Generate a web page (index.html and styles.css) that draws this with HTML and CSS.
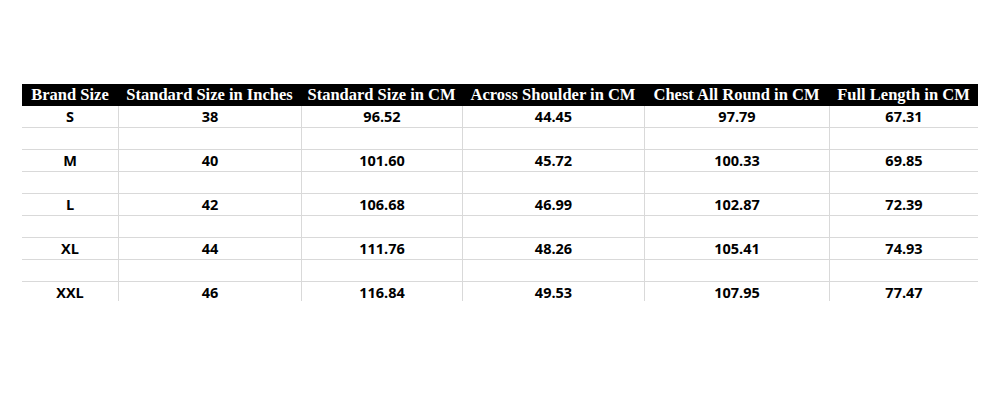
FILE: index.html
```html
<!DOCTYPE html>
<html>
<head>
<meta charset="utf-8">
<link rel="stylesheet" href="styles.css">
</head>
<body>
<div class="sheet">
  <div class="row head">
    <div class="cell">Brand Size</div>
    <div class="cell">Standard Size in Inches</div>
    <div class="cell">Standard Size in CM</div>
    <div class="cell">Across Shoulder in CM</div>
    <div class="cell">Chest All Round in CM</div>
    <div class="cell">Full Length in CM</div>
  </div>
  <div class="row data">
    <div class="cell">S</div><div class="cell">38</div><div class="cell">96.52</div><div class="cell">44.45</div><div class="cell">97.79</div><div class="cell">67.31</div>
  </div>
  <div class="row data">
    <div class="cell"></div><div class="cell"></div><div class="cell"></div><div class="cell"></div><div class="cell"></div><div class="cell"></div>
  </div>
  <div class="row data">
    <div class="cell">M</div><div class="cell">40</div><div class="cell">101.60</div><div class="cell">45.72</div><div class="cell">100.33</div><div class="cell">69.85</div>
  </div>
  <div class="row data">
    <div class="cell"></div><div class="cell"></div><div class="cell"></div><div class="cell"></div><div class="cell"></div><div class="cell"></div>
  </div>
  <div class="row data">
    <div class="cell">L</div><div class="cell">42</div><div class="cell">106.68</div><div class="cell">46.99</div><div class="cell">102.87</div><div class="cell">72.39</div>
  </div>
  <div class="row data">
    <div class="cell"></div><div class="cell"></div><div class="cell"></div><div class="cell"></div><div class="cell"></div><div class="cell"></div>
  </div>
  <div class="row data">
    <div class="cell">XL</div><div class="cell">44</div><div class="cell">111.76</div><div class="cell">48.26</div><div class="cell">105.41</div><div class="cell">74.93</div>
  </div>
  <div class="row data">
    <div class="cell"></div><div class="cell"></div><div class="cell"></div><div class="cell"></div><div class="cell"></div><div class="cell"></div>
  </div>
  <div class="row data last">
    <div class="cell">XXL</div><div class="cell">46</div><div class="cell">116.84</div><div class="cell">49.53</div><div class="cell">107.95</div><div class="cell">77.47</div>
  </div>
</div>
</body>
</html>
```

FILE: styles.css
```css
html, body {
  margin: 0;
  padding: 0;
  background: #ffffff;
}

.sheet {
  padding: 84px 0 0 22px;
  width: 956px;
}

.row {
  display: grid;
  grid-template-columns: 96px 183px 161px 182px 185px 149px;
}

.cell {
  text-align: center;
  white-space: nowrap;
}

.head {
  background: #000000;
  height: 22px;
}

.head .cell {
  color: #ffffff;
  font-family: "Liberation Serif", "Times New Roman", serif;
  font-weight: bold;
  font-size: 16.5px;
  line-height: 22px;
}

.data .cell {
  height: 21px;
  line-height: 21px;
  border-bottom: 1px solid #d9d9d9;
  font-family: "Open Sans", "Liberation Sans", sans-serif;
  font-weight: 700;
  font-size: 14.5px;
  color: #000000;
}

.data .cell + .cell {
  border-left: 1px solid #d9d9d9;
}

.data.last .cell {
  box-sizing: border-box;
  height: 19px;
  padding-top: 3px;
  line-height: 16px;
  border-bottom: none;
}
```
